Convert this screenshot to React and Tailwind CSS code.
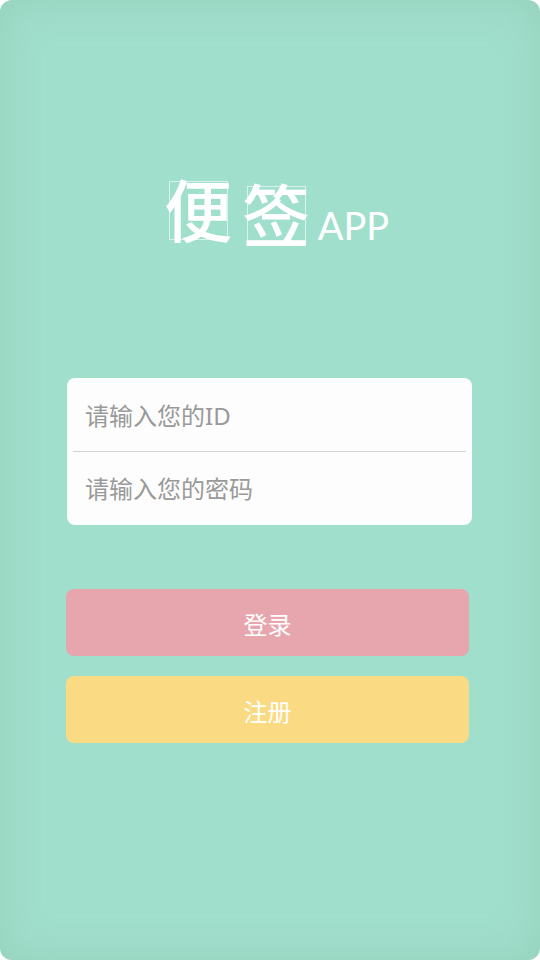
function FramedCharacter({ children, className }) {
  return (
    <span
      className={`flex size-[59px] items-center justify-center border border-white/60 text-[68px] leading-none font-medium ${className}`}
    >
      <span className="whitespace-nowrap">{children}</span>
    </span>
  );
}

function Field({ id, label, type }) {
  return (
    <input
      id={id}
      name={id}
      type={type}
      aria-label={label}
      placeholder={label}
      className="block h-[72px] w-full bg-transparent px-3 text-2xl text-[#666] outline-none placeholder:text-[#999]"
    />
  );
}

export default function App() {
  return (
    <div className="min-h-screen bg-white font-['Noto_Sans','Noto_Sans_CJK_SC',sans-serif]">
      <main className="flex min-h-screen flex-col rounded-xl bg-[#a1dfcd] pt-[181px] pr-[68px] pl-[66px] shadow-[inset_0_0_44px_rgba(128,184,156,0.35)]">
        <h1 className="flex h-[64px] justify-center pl-5 text-white">
          <FramedCharacter>便</FramedCharacter>
          <FramedCharacter className="mt-[5px] ml-[19px]">签</FramedCharacter>
          <span className="mt-4 ml-3 font-['Lato',sans-serif] text-[38px]">APP</span>
        </h1>

        <form className="mt-[133px] flex flex-col" onSubmit={(event) => event.preventDefault()}>
          <div className="ml-px rounded-lg bg-[#fdfdfd] px-[6px] py-px">
            <Field id="user-id" label="请输入您的ID" type="text" />
            <hr className="border-t border-[#d2d2d2]" />
            <Field id="password" label="请输入您的密码" type="password" />
          </div>

          <div className="mt-16 mr-[3px] flex flex-col gap-5 text-2xl text-white">
            <button type="submit" className="h-[67px] rounded-lg bg-[#e7a6ad] pt-1">
              登录
            </button>
            <button type="button" className="h-[67px] rounded-lg bg-[#fadb84] pt-1">
              注册
            </button>
          </div>
        </form>
      </main>
    </div>
  );
}
